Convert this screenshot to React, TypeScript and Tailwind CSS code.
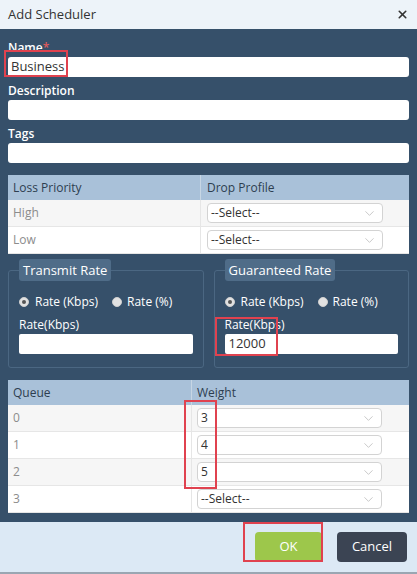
import { X, ChevronDown } from 'lucide-react';

function Select({ value }: { value: string }) {
  return (
    <div className="h-[20px] bg-white border border-[#d3d3d3] rounded-[4px] flex items-center justify-between pl-[3px] pr-[5px] text-[12px] text-[#333]">
      <span>{value}</span>
      <ChevronDown size={15} strokeWidth={1.1} className="text-[#b0b0b0]" />
    </div>
  );
}

function Radio({ checked }: { checked?: boolean }) {
  return (
    <span className="w-[10px] h-[10px] rounded-full bg-[#e2e2e2] border border-[#cfcfcf] flex items-center justify-center">
      {checked && <span className="w-[4px] h-[4px] rounded-full bg-[#555]" />}
    </span>
  );
}

function RateBox({ title, value }: { title: string; value?: string }) {
  return (
    <fieldset className="flex-1 border border-[#4b6782] rounded-[3px] px-[10px] pb-[13px]">
      <legend className="bg-[#4f6c88] text-white text-[13px] leading-[22px] px-[4px] rounded-[3px]">{title}</legend>
      <div className="flex items-center text-white text-[12px] mt-[13px] h-[16px]">
        <Radio checked />
        <span className="ml-[6px] mr-[14px]">Rate (Kbps)</span>
        <Radio />
        <span className="ml-[5px]">Rate (%)</span>
      </div>
      <div className="text-white text-[12px] leading-[16px] mt-[7px]">Rate(Kbps)</div>
      <div className="h-[20px] bg-white rounded-[2px] mt-[1px] text-[13px] text-[#333] flex items-center px-[4px]">{value}</div>
    </fieldset>
  );
}

function Field({ label, value, req }: { label: string; value?: string; req?: boolean }) {
  return (
    <div className="flex flex-col">
      <div className="text-white text-[12px] font-semibold leading-[16px]">
        {label}
        {req && <span className="text-[#e05a5a]">*</span>}
      </div>
      <div className="h-[20px] bg-white rounded-[3px] mt-[1px] text-[13px] text-[#333] flex items-center px-[3px]">{value}</div>
    </div>
  );
}

export default function App() {
  const loss = ['High', 'Low'];
  const queues = [
    { q: '0', w: '3' },
    { q: '1', w: '4' },
    { q: '2', w: '5' },
    { q: '3', w: '--Select--' },
  ];
  return (
    <div className="relative w-[417px] h-[574px] flex flex-col overflow-hidden" style={{ fontFamily: '"Open Sans", "Noto Sans", sans-serif' }}>
      {/* Header */}
      <div className="h-[29px] bg-[#edf3f9] flex items-center justify-between px-[8px]">
        <span className="text-[13px] text-[#333]">Add Scheduler</span>
        <X size={13} strokeWidth={3} className="text-[#333]" />
      </div>

      {/* Body */}
      <div className="flex-1 bg-[#36506a] px-[8px] pt-[11px] flex flex-col">
        <div className="flex flex-col gap-[6px]">
          <Field label="Name" value="Business" req />
          <Field label="Description" />
          <Field label="Tags" />
        </div>

        {/* Loss priority table */}
        <div className="mt-[12px] bg-white text-[12px]">
          <div className="flex h-[25px] bg-[#a9c1d9] text-[#2d3e50]">
            <div className="w-[193px] border-r border-[#c7d6e4] px-[5px] flex items-center">Loss Priority</div>
            <div className="flex-1 px-[6px] flex items-center">Drop Profile</div>
          </div>
          {loss.map((l, i) => (
            <div key={l} className={`flex h-[27px] border-b border-[#e6e6e6] ${i % 2 === 0 ? 'bg-[#f6f6f6]' : 'bg-white'}`}>
              <div className="w-[193px] border-r border-[#e6e6e6] px-[5px] flex items-center text-[#8c8c8c]">{l}</div>
              <div className="flex-1 pl-[6px] pr-[26px] flex items-center">
                <div className="flex-1"><Select value="--Select--" /></div>
              </div>
            </div>
          ))}
        </div>

        {/* Rates */}
        <div className="flex gap-[10px] mt-[5px]">
          <RateBox title="Transmit Rate" />
          <RateBox title="Guaranteed Rate" value="12000" />
        </div>

        {/* Queue table */}
        <div className="mt-[12px] bg-white text-[12px]">
          <div className="flex h-[25px] bg-[#a9c1d9] text-[#2d3e50]">
            <div className="w-[184px] border-r border-[#c7d6e4] px-[5px] flex items-center">Queue</div>
            <div className="flex-1 px-[5px] flex items-center">Weight</div>
          </div>
          {queues.map((r, i) => (
            <div key={r.q} className={`flex h-[27px] border-b border-[#e6e6e6] ${i % 2 === 0 ? 'bg-[#f6f6f6]' : 'bg-white'}`}>
              <div className="w-[184px] border-r border-[#e6e6e6] px-[5px] flex items-center text-[#8c8c8c]">{r.q}</div>
              <div className="flex-1 pl-[5px] pr-[27px] flex items-center">
                <div className="flex-1"><Select value={r.w} /></div>
              </div>
            </div>
          ))}
        </div>
      </div>

      {/* Footer */}
      <div className="h-[52px] bg-[#dce9f5] border-b-2 border-[#9aa6b2] flex items-center justify-end gap-[15px] px-[10px]">
        <button className="w-[67px] h-[30px] rounded-[4px] bg-[#9dc74b] text-white text-[13px]">OK</button>
        <button className="w-[70px] h-[30px] rounded-[4px] bg-[#3b4453] text-white text-[13px]">Cancel</button>
      </div>

      {/* Annotation boxes */}
      <div className="absolute left-[4px] top-[50px] w-[64px] h-[27px] border-2 border-[#e0424f]" />
      <div className="absolute left-[215px] top-[317px] w-[63px] h-[39px] border-2 border-[#e0424f]" />
      <div className="absolute left-[184px] top-[400px] w-[33px] h-[89px] border-2 border-[#e0424f]" />
      <div className="absolute left-[243px] top-[522px] w-[80px] h-[40px] border-2 border-[#e0424f]" />
    </div>
  );
}
